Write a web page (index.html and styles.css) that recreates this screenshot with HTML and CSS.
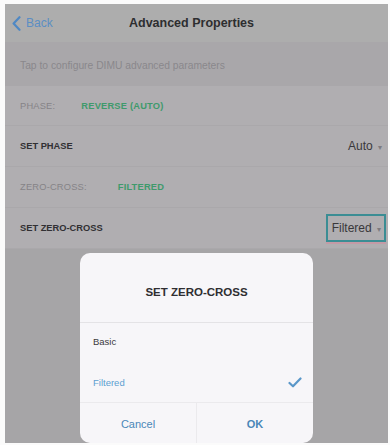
FILE: index.html
```html
<!DOCTYPE html>
<html>
<head>
<meta charset="utf-8">
<link rel="stylesheet" href="styles.css">
</head>
<body>
<div class="screen">
  <header class="nav">
    <div class="back">
      <svg width="9" height="15" viewBox="0 0 9 15"><path d="M7.5 1.2 L1.6 7.5 L7.5 13.8" fill="none" stroke="#4f88c4" stroke-width="2.2" stroke-linecap="round" stroke-linejoin="round"/></svg>
      <span>Back</span>
    </div>
    <div class="title">Advanced Properties</div>
  </header>
  <div class="hint">Tap to configure DIMU advanced parameters</div>
  <div class="list">
    <div class="row info"><span class="label">PHASE:</span><span class="val v1">REVERSE (AUTO)</span></div>
    <div class="row set"><span class="slabel">SET PHASE</span><span class="pick">Auto <span class="caret">▾</span></span></div>
    <div class="row info"><span class="label">ZERO-CROSS:</span><span class="val v2">FILTERED</span></div>
    <div class="row set"><span class="slabel">SET ZERO-CROSS</span><span class="pick boxed">Filtered <span class="caret">▾</span></span></div>
  </div>
  <div class="lower"></div>

  <div class="dialog">
    <div class="dtitle">SET ZERO-CROSS</div>
    <div class="opt">Basic</div>
    <div class="opt sel">Filtered
      <svg width="14" height="11" viewBox="0 0 14 11"><path d="M1.5 6 L5 9.3 L12.5 1.5" fill="none" stroke="#5a97c9" stroke-width="2.2" stroke-linecap="round" stroke-linejoin="round"/></svg>
    </div>
    <div class="btns">
      <div class="btn">Cancel</div>
      <div class="btn ok">OK</div>
    </div>
  </div>
</div>
</body>
</html>
```
FILE: styles.css
```css
html, body {
  margin: 0;
  padding: 0;
  background: #fbfbfb;
}
body {
  font-family: "Liberation Sans", Arial, sans-serif;
  width: 390px;
  height: 445px;
  overflow: hidden;
}
.screen {
  position: relative;
  margin: 4px 2px 0 5px;
  height: 439px;
  background: #a6a5a7;
  display: flex;
  flex-direction: column;
}
.nav {
  height: 38px;
  background: #adadad;
  display: flex;
  align-items: center;
  position: relative;
}
.back {
  display: flex;
  align-items: center;
  gap: 5px;
  padding-left: 7px;
  color: #5b8ec4;
  font-size: 12px;
}
.title {
  position: absolute;
  left: 0;
  right: 0;
  text-align: center;
  font-weight: bold;
  font-size: 12.5px;
  color: #2e2e30;
  pointer-events: none;
  margin-left: -10px;
}
.hint {
  height: 44px;
  background: #a9a7aa;
  display: flex;
  align-items: center;
  padding-left: 15px;
  padding-top: 2px;
  box-sizing: border-box;
  font-size: 10.3px;
  color: #8a888c;
}
.list {
  background: #b0aeb1;
  display: flex;
  flex-direction: column;
}
.row {
  height: 41px;
  display: flex;
  align-items: center;
  padding-left: 15px;
  padding-right: 2px;
  box-sizing: border-box;
  border-bottom: 1px solid #aaa8ab;
}
.row:first-child { height: 40px; }
.label {
  font-size: 9.3px;
  color: #858387;
  letter-spacing: 0.2px;
}
.val {
  font-size: 9.3px;
  font-weight: bold;
  color: #3f9a6c;
  letter-spacing: 0.2px;
}
.v1 { margin-left: 26px; }
.v2 { margin-left: 31px; }
.slabel {
  font-size: 9.3px;
  font-weight: bold;
  color: #313033;
  flex: 1;
}
.pick {
  font-size: 12px;
  color: #39383b;
  padding-right: 4px;
}
.caret {
  font-size: 8px;
  color: #7d7b80;
  margin-left: 2px;
}
.boxed {
  border: 2px solid #3b8d94;
  padding: 5px 3px 5px 4px;
  box-shadow: 0 2px 0 #c49aa6;
}
.lower {
  flex: 1;
  background: #a6a5a7;
}
.dialog {
  position: absolute;
  left: 75px;
  top: 249px;
  width: 233px;
  height: 190px;
  background: #f7f6f9;
  border-radius: 10px;
  display: flex;
  flex-direction: column;
  overflow: hidden;
}
.dtitle {
  height: 70px;
  display: flex;
  align-items: center;
  justify-content: center;
  padding-top: 9px;
  box-sizing: border-box;
  font-weight: bold;
  font-size: 11.5px;
  color: #2f2e31;
  border-bottom: 1px solid #e4e3e6;
}
.opt {
  height: 40px;
  display: flex;
  align-items: center;
  justify-content: space-between;
  padding: 0 11px 3px 13px;
  box-sizing: border-box;
  font-size: 9.5px;
  color: #3a393c;
}
.opt.sel {
  color: #5c9fd1;
  border-bottom: 1px solid #ebeaed;
  padding-bottom: 0;
}
.btns {
  flex: 1;
  display: flex;
}
.btn {
  flex: 1;
  display: flex;
  align-items: center;
  justify-content: center;
  font-size: 11px;
  color: #4a87b8;
  padding-top: 2px;
}
.btn.ok {
  font-weight: bold;
  border-left: 1px solid #ebeaed;
}
```
